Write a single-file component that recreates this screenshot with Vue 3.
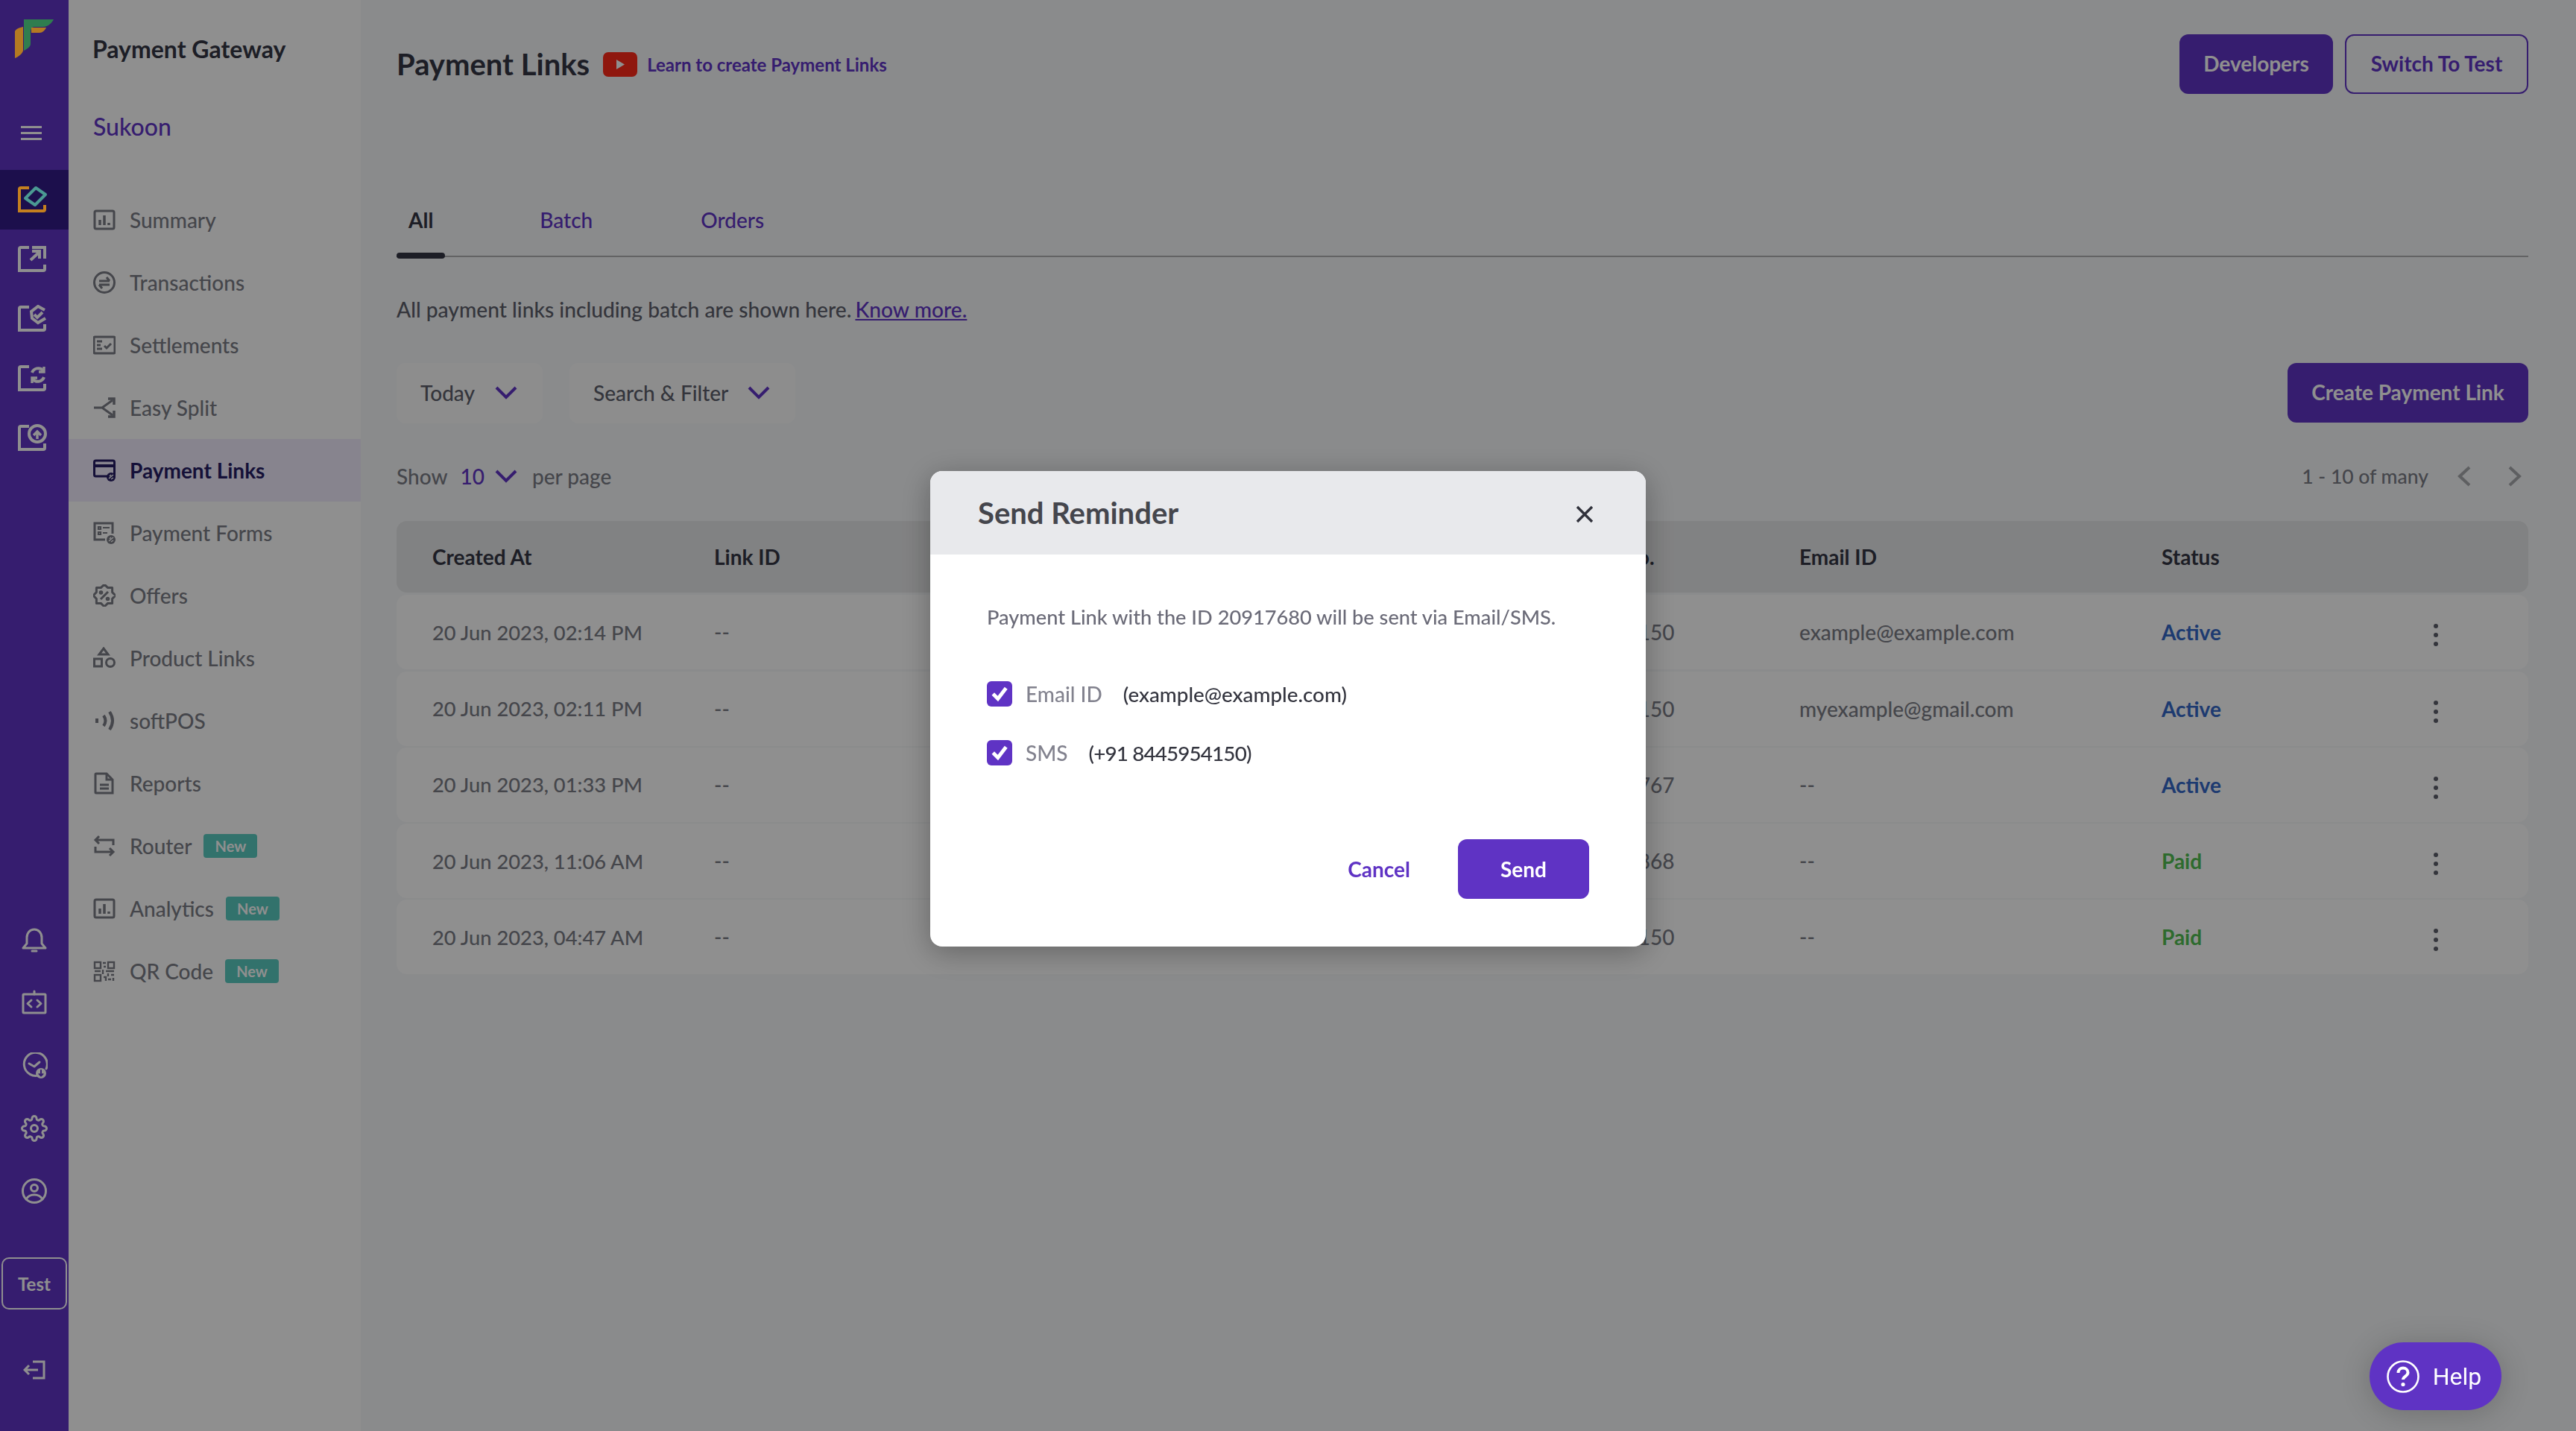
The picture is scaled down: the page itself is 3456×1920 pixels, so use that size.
<template>
  <div class="page">
    <aside class="rail">
      <svg class="logo above" width="54" height="54" viewBox="0 0 54 54">
        <path d="M12 1h40c-2 4-7 10-14 10H26c-3 0-5 3-5 7v16c0 4-5 7-9 9z" fill="#2f7d4f" />
        <path d="M0 17c1-3 6-5 11-6v32c-1 4-6 8-11 10z" fill="#b47a22" />
        <path d="M22 12h20c-2 4-5 7-9 7H22z" fill="#b47a22" />
      </svg>
      <button class="burger"><span></span><span></span><span></span></button>
      <div class="rail-group">
        <div class="rail-item active">
          <svg class="above" width="40" height="38" viewBox="0 0 40 38" fill="none" stroke-width="4">
            <path d="M15 3H4a2 2 0 0 0-2 2v29h32a2 2 0 0 0 2-2v-6" stroke="#c4801f" />
            <path d="M10 17L24 3l13 9-14 14z" stroke="#4b9a93" stroke-linejoin="round" />
          </svg>
        </div>
        <div class="rail-item">
          <svg width="40" height="38" viewBox="0 0 40 38" fill="none" stroke="#fff" stroke-width="4">
            <path d="M15 3H4a2 2 0 0 0-2 2v29h32a2 2 0 0 0 2-2v-6" />
            <path d="M19 3h17v15" />
            <path d="M17 20l12-11M19 8h10v10" stroke-width="4" />
          </svg>
        </div>
        <div class="rail-item">
          <svg width="40" height="38" viewBox="0 0 40 38" fill="none" stroke="#fff" stroke-width="4">
            <path d="M15 3H4a2 2 0 0 0-2 2v29h32a2 2 0 0 0 2-2v-6" />
            <path d="M36 7L27 2l-9 7 1 9 8 6 10-6" />
            <path d="M22 13l4 4 7-7" />
          </svg>
        </div>
        <div class="rail-item">
          <svg width="40" height="38" viewBox="0 0 40 38" fill="none" stroke="#fff" stroke-width="4">
            <path d="M15 3H4a2 2 0 0 0-2 2v29h32a2 2 0 0 0 2-2v-6" />
            <path d="M19 11c2-6 10-8 15-3M35 17c-2 6-10 8-15 3" />
            <path d="M35 3v7h-7M19 25v-7h7" stroke-width="3.4" />
          </svg>
        </div>
        <div class="rail-item">
          <svg width="40" height="38" viewBox="0 0 40 38" fill="none" stroke="#fff" stroke-width="4">
            <path d="M15 3H4a2 2 0 0 0-2 2v29h32a2 2 0 0 0 2-2v-6" />
            <circle cx="26" cy="13" r="11" />
            <path d="M21 15l5-5 5 5M26 11v9" stroke-width="3.4" />
          </svg>
        </div>
      </div>
      <div class="rail-bottom">
        <div class="rail-tool" v-for="tool in railTools" :key="tool.name">
          <svg width="36" height="36" :viewBox="tool.box" fill="none" stroke="#fff" :stroke-width="tool.sw" stroke-linecap="round" stroke-linejoin="round" v-html="tool.svg"></svg>
        </div>
        <div class="test-btn">Test</div>
        <div class="rail-exit">
          <svg width="30" height="26" viewBox="0 0 30 26" fill="none" stroke="#fff" stroke-width="3">
            <path d="M13 2h15v22H13" />
            <path d="M20 13H2M8 7l-6 6 6 6" />
          </svg>
        </div>
      </div>
    </aside>

    <nav class="sidenav">
      <div class="side-title">Payment Gateway</div>
      <div class="side-merchant">Sukoon</div>
      <ul class="side-menu">
        <li v-for="item in menu" :key="item.label" class="side-item" :class="{ on: item.active }">
          <svg class="side-icon" width="30" height="30" viewBox="0 0 30 30" fill="none" stroke="currentColor" stroke-width="3" v-html="item.icon"></svg>
          <span>{{ item.label }}</span>
          <em v-if="item.badge" class="badge">New</em>
        </li>
      </ul>
    </nav>

    <main class="content">
      <header class="top">
        <h1>Payment Links</h1>
        <svg class="yt" width="46" height="33" viewBox="0 0 46 33">
          <rect width="46" height="33" rx="7" fill="#ff2a1a" />
          <path d="M18 10l11 6.500-11 6.500z" fill="#fff" />
        </svg>
        <a class="learn">Learn to create Payment Links</a>
        <div class="top-btns">
          <button class="btn solid dev">Developers</button>
          <button class="btn outline">Switch To Test</button>
        </div>
      </header>

      <div class="tabs">
        <div class="tab sel">All</div>
        <div class="tab">Batch</div>
        <div class="tab">Orders</div>
      </div>

      <p class="intro">All payment links including batch are shown here.<a>Know more.</a></p>

      <div class="filters">
        <div class="select today">Today
          <svg class="chev" width="30" height="18" viewBox="0 0 30 18"><path d="M2 2l13 13L28 2" /></svg>
        </div>
        <div class="select search">Search &amp; Filter
          <svg class="chev" width="30" height="18" viewBox="0 0 30 18"><path d="M2 2l13 13L28 2" /></svg>
        </div>
        <button class="btn solid create">Create Payment Link</button>
      </div>

      <div class="pager-row">
        <span class="show">Show</span>
        <b>10</b>
        <svg class="chev" width="30" height="18" viewBox="0 0 30 18"><path d="M2 2l13 13L28 2" /></svg>
        <span>per page</span>
        <span class="count">1 - 10 of many</span>
        <svg class="arrow" width="20" height="28" viewBox="0 0 20 28"><path d="M17 2L4 14l13 12" /></svg>
        <svg class="arrow next" width="20" height="28" viewBox="0 0 20 28"><path d="M3 2l13 12L3 26" /></svg>
      </div>

      <div class="table">
        <div class="tr head">
          <div>Created At</div>
          <div>Link ID</div>
          <div>Phone No.</div>
          <div>Email ID</div>
          <div>Status</div>
          <div></div>
        </div>
        <div class="tr" v-for="row in rows" :key="row.date">
          <div class="date">{{ row.date }}</div>
          <div>--</div>
          <div class="phone">{{ row.phone }}</div>
          <div>{{ row.email }}</div>
          <div :class="row.status === 'Paid' ? 'paid' : 'act'">{{ row.status }}</div>
          <div class="kebab"><i></i><i></i><i></i></div>
        </div>
      </div>
    </main>

    <div class="overlay">
      <section class="modal">
        <div class="modal-head">
          <h2>Send Reminder</h2>
          <svg class="close" width="24" height="24" viewBox="0 0 24 24" fill="none" stroke="#30313b" stroke-width="3.400"><path d="M2 2l20 20M22 2L2 22" /></svg>
        </div>
        <p class="modal-text">Payment Link with the ID 20917680 will be sent via Email/SMS.</p>
        <div class="check first">
          <span class="box"><svg width="24" height="22" viewBox="0 0 22 20" fill="none" stroke="#fff" stroke-width="4.500"><path d="M3 10l6 6L19 3" /></svg></span>
          <span class="check-label">Email ID</span>
          <span class="check-value">(example@example.com)</span>
        </div>
        <div class="check">
          <span class="box"><svg width="24" height="22" viewBox="0 0 22 20" fill="none" stroke="#fff" stroke-width="4.500"><path d="M3 10l6 6L19 3" /></svg></span>
          <span class="check-label">SMS</span>
          <span class="check-value tight">(+91 8445954150)</span>
        </div>
        <div class="modal-foot">
          <a class="cancel">Cancel</a>
          <button class="send">Send</button>
        </div>
      </section>
    </div>

    <div class="help">
      <svg width="44" height="44" viewBox="0 0 44 44" fill="none" stroke="#fff" stroke-width="2.600">
        <circle cx="22" cy="22" r="20.500" />
        <path d="M15.500 17c0-4 3-6.500 6.500-6.500s6.500 2.500 6.500 6c0 5-6.500 5-6.500 9.500" stroke-width="4" />
        <circle cx="22" cy="32.500" r="2.600" fill="#fff" stroke="none" />
      </svg>
      <span>Help</span>
    </div>
  </div>
</template>

<script setup>
// star shaped outline for the offers icon
const burst = (cx, cy, r1, r2, n) => {
  const pts = [];
  for (let i = 0; i < n * 2; i++) {
    const r = i % 2 ? r2 : r1;
    const a = (Math.PI * i) / n;
    pts.push(`${(cx + r * Math.sin(a)).toFixed(1)},${(cy - r * Math.cos(a)).toFixed(1)}`);
  }
  return pts.join(' ');
};

const chart = '<rect x="2" y="3" width="26" height="24" rx="2"/><path d="M9 22v-7M15 22V9M21 22v-3" stroke-width="3.500"/>';
const linkDot = (fill, line) =>
  `<circle cx="24" cy="24" r="6" fill="${fill}" stroke="none"/><path d="M21 26l6-5M22 23l2-2M24 27l3-2" stroke="${line}" stroke-width="1.400"/>`;

const menu = [
  { label: 'Summary', icon: chart },
  {
    label: 'Transactions',
    icon: '<circle cx="15" cy="15" r="13.500"/><path d="M8 13h14M18 8l4 5M22 18H8M12 23l-4-5"/>',
  },
  {
    label: 'Settlements',
    icon: '<rect x="1" y="4" width="28" height="22" rx="1.500"/><path d="M5 10h7M5 15h5M5 20h7M15 16l3 3 6-6"/>',
  },
  {
    label: 'Easy Split',
    icon: '<path d="M1 15h11L26 5M12 15l14 10"/><path d="M20 3h8v8M20 27h8v-8" stroke-width="3.500"/>',
  },
  {
    label: 'Payment Links',
    active: true,
    icon: '<rect x="1.500" y="2" width="27" height="21" rx="2"/><path d="M1.500 9h27" stroke-width="4"/>' + linkDot('#261d64', '#fff'),
  },
  {
    label: 'Payment Forms',
    icon: '<path d="M16 24H2V2h24v14"/><path d="M7 7h3v3H7zM7 14h3v3H7zM13 8h9M13 15h6" stroke-width="2.200"/>' + linkDot('#7b7d87', '#fff'),
  },
  {
    label: 'Offers',
    icon: `<polygon points="${burst(15, 15, 15, 11.5, 8)}" stroke-linejoin="round"/><path d="M10 20l10-10" /><circle cx="10.500" cy="11" r="1.300"/><circle cx="19.500" cy="19.500" r="1.300"/>`,
  },
  {
    label: 'Product Links',
    icon: '<path d="M14 2l6 8H8z"/><rect x="1.500" y="16" width="10" height="10"/><circle cx="23" cy="21" r="5.500"/>',
  },
  {
    label: 'softPOS',
    icon: '<path d="M5 12v6" stroke-width="4"/><path d="M14 8q5 7 0 14" stroke-width="4"/><path d="M22 3q8 12 0 24" stroke-width="4"/>',
  },
  {
    label: 'Reports',
    icon: '<path d="M4 2h14l8 8v18H4a1 1 0 0 1-1-1V3a1 1 0 0 1 1-1z"/><path d="M18 2v8h8M9 17h12M9 22h12"/>',
  },
  {
    label: 'Router',
    badge: true,
    icon: '<path d="M8 2L3 7l5 5M4 7h23v7M22 28l5-5-5-5M26 23H3v-7"/>',
  },
  { label: 'Analytics', badge: true, icon: chart },
  {
    label: 'QR Code',
    badge: true,
    icon: '<g stroke-width="2.400"><rect x="2" y="3" width="8" height="8"/><rect x="20" y="3" width="8" height="8"/><rect x="2" y="20" width="8" height="8"/><path d="M13 4h4M14 9h3M2 15h8M13 13v6M17 15h11M20 18v4M24 20h4M14 23h3v5M20 26h4M27 24v4"/></g>',
  },
];

const railTools = [
  {
    name: 'bell',
    box: '0 0 36 36',
    sw: 3,
    svg: '<path d="M18 3c6 0 10 5 10 11v8l5 6H3l5-6v-8c0-6 4-11 10-11zM15 32h6"/>',
  },
  {
    name: 'code',
    box: '0 0 36 36',
    sw: 3,
    svg: '<rect x="3" y="6" width="30" height="25" rx="1"/><path d="M18 2v4M14 14l-5 4.500 5 4.500M22 14l5 4.500-5 4.500"/>',
  },
  {
    name: 'clock',
    box: '0 0 36 36',
    sw: 3,
    svg: '<path d="M26 30a15.500 15.500 0 1 1 8-8"/><path d="M11 15l7 4 7-6"/><circle cx="27" cy="28" r="7" fill="#fff" stroke="none"/><path d="M27 24v7M24.500 29l2.500 2.500 2.500-2.500" stroke="#6034c6" stroke-width="2"/>',
  },
  {
    name: 'settings',
    box: '0 0 24 24',
    sw: 2,
    svg: '<circle cx="12" cy="12" r="3"/><path d="M19.4 15a1.65 1.65 0 0 0 .33 1.82l.06.06a2 2 0 0 1 0 2.83 2 2 0 0 1-2.83 0l-.06-.06a1.65 1.65 0 0 0-1.82-.33 1.65 1.65 0 0 0-1 1.51V21a2 2 0 0 1-2 2 2 2 0 0 1-2-2v-.09A1.65 1.65 0 0 0 9 19.4a1.65 1.65 0 0 0-1.82.33l-.06.06a2 2 0 0 1-2.83 0 2 2 0 0 1 0-2.83l.06-.06a1.65 1.65 0 0 0 .33-1.82 1.65 1.65 0 0 0-1.51-1H3a2 2 0 0 1-2-2 2 2 0 0 1 2-2h.09A1.65 1.65 0 0 0 4.600 9a1.65 1.65 0 0 0-.33-1.82l-.06-.06a2 2 0 0 1 0-2.83 2 2 0 0 1 2.83 0l.06.06a1.65 1.65 0 0 0 1.82.33H9a1.65 1.65 0 0 0 1-1.51V3a2 2 0 0 1 2-2 2 2 0 0 1 2 2v.09a1.65 1.65 0 0 0 1 1.51 1.65 1.65 0 0 0 1.82-.33l.06-.06a2 2 0 0 1 2.83 0 2 2 0 0 1 0 2.83l-.06.06a1.65 1.65 0 0 0-.33 1.82V9a1.65 1.65 0 0 0 1.51 1H21a2 2 0 0 1 2 2 2 2 0 0 1-2 2h-.09a1.65 1.65 0 0 0-1.51 1z"/>',
  },
  {
    name: 'user',
    box: '0 0 36 36',
    sw: 3,
    svg: '<circle cx="18" cy="18" r="15.500"/><circle cx="18" cy="14" r="4.500"/><path d="M7 29c3-5 7-6 11-6s8 1 11 6"/>',
  },
];

const rows = [
  { date: '20 Jun 2023, 02:14 PM', phone: '8445954150', email: 'example@example.com', status: 'Active' },
  { date: '20 Jun 2023, 02:11 PM', phone: '8445954150', email: 'myexample@gmail.com', status: 'Active' },
  { date: '20 Jun 2023, 01:33 PM', phone: '8445954767', email: '--', status: 'Active' },
  { date: '20 Jun 2023, 11:06 AM', phone: '8445954868', email: '--', status: 'Paid' },
  { date: '20 Jun 2023, 04:47 AM', phone: '8445954150', email: '--', status: 'Paid' },
];
</script>

<style scoped>
.page {
  display: flex;
  width: 100vw;
  height: 100vh;
  overflow: hidden;
  background: #f6f8fa;
  font-family: Lato, "Liberation Sans", sans-serif;
  font-size: 28px;
  font-weight: 500;
  color: #7b7d87;
}

.above {
  position: relative;
  z-index: 1;
}

.rail {
  display: flex;
  flex-direction: column;
  flex: 0 0 92px;
  background: #6034c6;
}

.logo {
  margin: 25px 0 0 20px;
}

.burger {
  display: flex;
  flex-direction: column;
  gap: 5px;
  align-self: flex-start;
  margin: 90px 0 0 28px;
  padding: 0;
  background: none;
  border: none;
}

.burger span {
  width: 28px;
  height: 3px;
  background: #fff;
}

.rail-group {
  margin-top: 40px;
}

.rail-item {
  display: flex;
  align-items: center;
  height: 80px;
  padding-left: 24px;
}

.rail-item.active {
  background: #321b88;
}

.rail-bottom {
  display: flex;
  flex-direction: column;
  margin-top: auto;
  padding-bottom: 42px;
}

.rail-tool {
  display: flex;
  align-items: center;
  justify-content: center;
  height: 84px;
}

.test-btn {
  display: flex;
  align-items: center;
  justify-content: center;
  height: 66px;
  margin: 47px 2px 0;
  border: 2px solid #fff;
  border-radius: 10px;
  color: #fff;
  font-size: 24px;
  font-weight: 700;
}

.rail-exit {
  display: flex;
  align-items: center;
  justify-content: center;
  height: 80px;
  margin-top: 41px;
}

.sidenav {
  flex: 0 0 392px;
  background: #fff;
}

.side-title {
  margin: 47px 0 0 32px;
  color: #343644;
  font-size: 32px;
  font-weight: 700;
  line-height: 38px;
}

.side-merchant {
  margin: 66px 0 0 33px;
  color: #6034c6;
  font-size: 32px;
  font-weight: 500;
  line-height: 38px;
}

.side-menu {
  margin: 64px 0 0;
  padding: 0;
  list-style: none;
}

.side-item {
  display: flex;
  align-items: center;
  height: 84px;
  padding-left: 33px;
}

.side-item.on {
  background: #f0ebfd;
  color: #261d64;
  font-weight: 700;
}

.side-icon {
  flex: none;
  margin-right: 19px;
}

.badge {
  margin-left: 16px;
  width: 72px;
  height: 32px;
  border-radius: 4px;
  background: #5acbc1;
  color: #fff;
  font-size: 20px;
  font-style: normal;
  font-weight: 700;
  line-height: 32px;
  text-align: center;
}

.content {
  flex: 1;
  min-width: 0;
  padding: 46px 64px 0 48px;
}

.top {
  display: flex;
  align-items: center;
  height: 80px;
}

h1 {
  margin: 0;
  color: #343644;
  font-size: 40px;
  font-weight: 700;
}

.yt {
  margin: 0 13px 0 18px;
}

.learn {
  color: #6034c6;
  font-size: 24px;
  font-weight: 700;
}

.top-btns {
  display: flex;
  gap: 16px;
  margin-left: auto;
}

.btn {
  height: 80px;
  padding: 0 0 2px;
  border-radius: 12px;
  font-family: inherit;
  font-size: 28px;
  font-weight: 700;
}

.solid {
  background: #6034c6;
  border: none;
  color: #fff;
}

.dev {
  width: 206px;
}

.outline {
  width: 246px;
  background: none;
  border: 2px solid #6034c6;
  color: #6034c6;
}

.tabs {
  display: flex;
  gap: 111px;
  height: 88px;
  margin-top: 129px;
  border-bottom: 2px solid #b0b1b3;
}

.tab {
  position: relative;
  padding: 0 16px;
  color: #6034c6;
  line-height: 80px;
  font-weight: 500;
}

.tab:last-child {
  margin-left: 2px;
}

.tab.sel {
  color: #343644;
  font-weight: 700;
}

.tab.sel::after {
  content: "";
  position: absolute;
  left: 0;
  right: 0;
  bottom: -4px;
  height: 8px;
  border-radius: 4px;
  background: #343644;
}

.intro {
  margin: 50px 0 0;
  color: #5d5f6b;
  font-size: 28.200px;
  line-height: 40px;
}

.intro a {
  margin-left: 5px;
  color: #6034c6;
  text-decoration: underline;
}

.filters {
  display: flex;
  gap: 36px;
  height: 81px;
  margin-top: 52px;
}

.select {
  display: flex;
  align-items: center;
  justify-content: space-between;
  box-sizing: border-box;
  padding: 0 34px 2px 32px;
  border-radius: 12px;
  background: #fcfcfc;
  color: #5d5f6b;
}

.today {
  width: 196px;
}

.search {
  width: 303px;
}

.chev {
  fill: none;
  stroke: #6034c6;
  stroke-width: 4;
}

.create {
  width: 323px;
  margin-left: auto;
}

.pager-row {
  display: flex;
  align-items: center;
  height: 40px;
  margin-top: 51px;
  gap: 20px;
}

.pager-row b {
  margin-right: -6px;
  color: #6034c6;
  font-weight: 500;
}

.show {
  margin-right: -3px;
}

.count {
  margin-left: auto;
  margin-right: 18px;
  font-size: 26.500px;
}

.arrow {
  fill: none;
  stroke: #a8a9ad;
  stroke-width: 4;
}

.arrow.next {
  margin: 0 8px 0 28px;
}

.table {
  display: flex;
  flex-direction: column;
  gap: 2.300px;
  margin-top: 40px;
}

.tr {
  display: grid;
  grid-template-columns: 378px 1131px 325px 486px 354px 28px;
  align-items: center;
  height: 100px;
  padding-left: 48px;
  border-radius: 14px;
  background: #fff;
}

.tr.head {
  height: 96px;
  margin-bottom: 1px;
  background: #e7e8e9;
  color: #343644;
  font-weight: 700;
}

.date {
  font-size: 27.300px;
}

.phone {
  margin-left: -5px;
}

.act {
  color: #3468c8;
  font-weight: 700;
}

.paid {
  color: #52bf52;
  font-weight: 700;
}

.kebab {
  display: flex;
  flex-direction: column;
  align-items: center;
  gap: 6px;
  margin-top: 8px;
}

.kebab i {
  width: 6px;
  height: 6px;
  border-radius: 50%;
  background: #5d5f6b;
}

.overlay {
  position: fixed;
  inset: 0;
  display: flex;
  align-items: center;
  justify-content: center;
  padding-bottom: 18px;
  box-sizing: border-box;
  background: rgba(0, 0, 0, 0.44);
}

.modal {
  width: 960px;
  box-sizing: border-box;
  padding-bottom: 64px;
  border-radius: 16px;
  overflow: hidden;
  background: #fff;
  box-shadow: 0 8px 40px rgba(0, 0, 0, 0.3);
}

.modal-head {
  display: flex;
  align-items: center;
  justify-content: space-between;
  height: 112px;
  padding: 0 70px 0 64px;
  background: #e8e9ec;
}

.close {
  margin-top: 3px;
}

h2 {
  margin: 0;
  color: #45464d;
  font-size: 40px;
  font-weight: 700;
}

.modal-text {
  margin: 64px 76px 0;
  color: #6b6b78;
  font-size: 27.200px;
  line-height: 40px;
}

.check {
  display: flex;
  align-items: center;
  height: 36px;
  margin: 43px 76px 0;
}

.check.first {
  margin-top: 65px;
}

.box {
  display: flex;
  align-items: center;
  justify-content: center;
  width: 34px;
  height: 34px;
  border-radius: 6px;
  background: #5f33c4;
}

.check-label {
  margin: 0 28px 0 18px;
  color: #82828e;
}

.check-value {
  color: #34353f;
  font-size: 27.800px;
}

.tight {
  letter-spacing: -0.85px;
}

.modal-foot {
  display: flex;
  align-items: center;
  justify-content: flex-end;
  gap: 64px;
  margin: 98px 76px 0;
}

.cancel {
  color: #5f33c4;
  font-weight: 700;
}

.send {
  width: 176px;
  height: 80px;
  border: none;
  border-radius: 12px;
  background: #5f33c4;
  color: #fff;
  font-family: inherit;
  font-size: 28px;
  font-weight: 700;
}

.help {
  position: fixed;
  right: 100px;
  bottom: 28px;
  display: flex;
  align-items: center;
  justify-content: center;
  gap: 18px;
  box-sizing: border-box;
  width: 177px;
  height: 91px;
  padding-right: 4px;
  border-radius: 46px;
  background: #5f33c4;
  box-shadow: 0 4px 40px rgba(0, 0, 0, 0.2);
  color: #fff;
  font-family: Roboto, sans-serif;
  font-size: 32px;
  font-weight: 400;
}
</style>
